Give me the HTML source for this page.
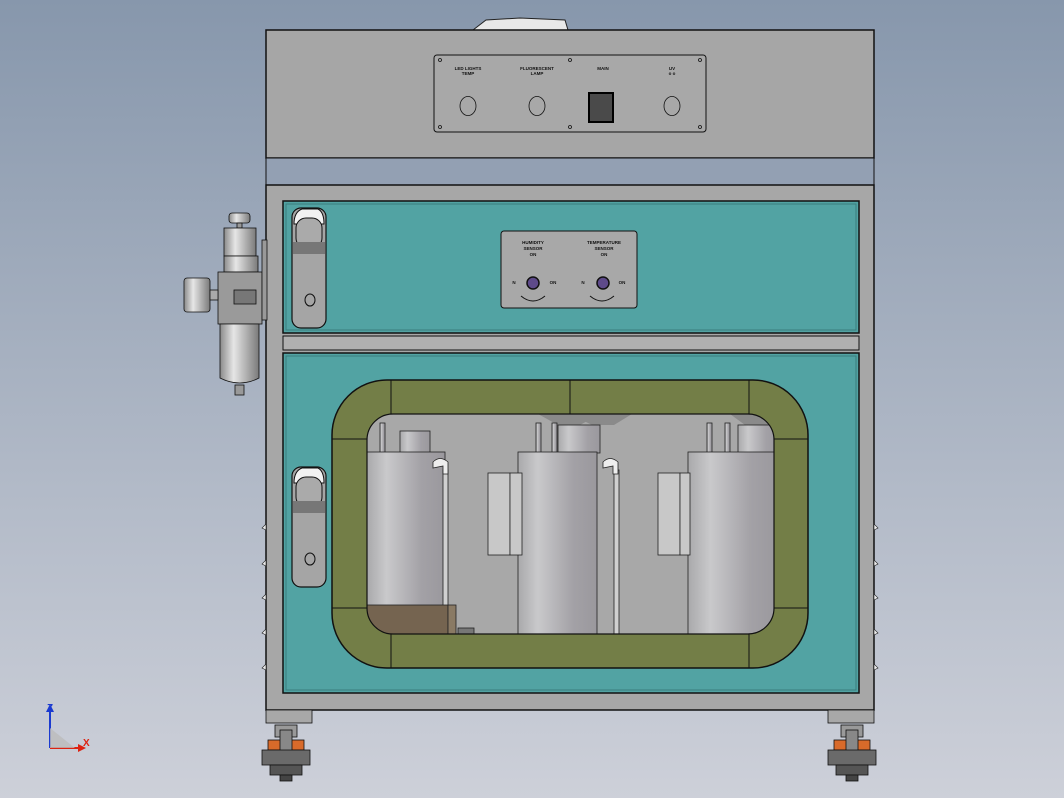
<!DOCTYPE html>
<html><head><meta charset="utf-8"><style>
html,body{margin:0;padding:0;width:1064px;height:798px;overflow:hidden}
svg{display:block}
text{font-family:"Liberation Sans",sans-serif;font-weight:bold}
</style></head><body>
<svg width="1064" height="798" viewBox="0 0 1064 798" xmlns="http://www.w3.org/2000/svg">
<defs>
<linearGradient id="bg" x1="0" y1="0" x2="0" y2="1"><stop offset="0" stop-color="#8797ac"/><stop offset="1" stop-color="#cdd0d9"/></linearGradient>
<linearGradient id="cyl" x1="0" y1="0" x2="1" y2="0"><stop offset="0" stop-color="#a9a9ab"/><stop offset="0.25" stop-color="#c9c9cb"/><stop offset="0.7" stop-color="#a3a1a6"/><stop offset="1" stop-color="#9a989d"/></linearGradient>
<linearGradient id="met" x1="0" y1="0" x2="1" y2="0"><stop offset="0" stop-color="#8a8a8a"/><stop offset="0.35" stop-color="#e6e6e6"/><stop offset="1" stop-color="#7a7a7a"/></linearGradient>
<clipPath id="win"><rect x="367" y="414" width="407" height="220" rx="26"/></clipPath>
</defs>
<rect width="1064" height="798" fill="url(#bg)"/>
<path d="M473 30 L486 20 L520 18 L565 20 L568 30 Z" fill="#e8e8e8" stroke="#222" stroke-width="1"/>
<rect x="266" y="30" width="608" height="128" fill="#a6a6a6" stroke="#111" stroke-width="1.5"/>
<rect x="434" y="55" width="272" height="77" rx="3" fill="#a8a8a8" stroke="#111"/>
<g fill="none" stroke="#111" stroke-width="0.8">
<circle cx="440" cy="60" r="1.5"/><circle cx="700" cy="60" r="1.5"/><circle cx="440" cy="127" r="1.5"/><circle cx="700" cy="127" r="1.5"/>
<circle cx="570" cy="60" r="1.5"/><circle cx="570" cy="127" r="1.5"/>
<ellipse cx="468" cy="106" rx="8" ry="9.5"/><ellipse cx="537" cy="106" rx="8" ry="9.5"/><ellipse cx="672" cy="106" rx="8" ry="9.5"/>
</g>
<rect x="589" y="93" width="24" height="29" fill="#4a4a4a" stroke="#000" stroke-width="2"/>
<g font-size="4.5" fill="#111" text-anchor="middle">
<text x="468" y="70">LED LIGHTS</text><text x="468" y="75">TEMP</text>
<text x="537" y="70">FLUORESCENT</text><text x="537" y="75">LAMP</text>
<text x="603" y="70">MAIN</text><text x="672" y="70">UV</text><text x="672" y="75">o  o</text>
</g>
<rect x="266" y="158" width="608" height="27" fill="#93a0b3" stroke="#111" stroke-width="1"/>
<rect x="266" y="185" width="608" height="525" fill="#a7a7a7" stroke="#111" stroke-width="1.5"/>
<rect x="283" y="201" width="576" height="132" fill="#52a3a3" stroke="#111" stroke-width="1.5"/>
<rect x="286" y="204" width="570" height="126" fill="none" stroke="#3a7d7d" stroke-width="1"/>
<rect x="283" y="336" width="576" height="14" fill="#b0b0b0" stroke="#111"/>
<rect x="283" y="353" width="576" height="340" fill="#52a3a3" stroke="#111" stroke-width="1.5"/>
<rect x="286" y="356" width="570" height="334" fill="none" stroke="#3a7d7d" stroke-width="1"/>
<rect x="501" y="231" width="136" height="77" rx="3" fill="#a8a8a8" stroke="#111"/>
<g font-size="4.5" fill="#111" text-anchor="middle">
<text x="533" y="244">HUMIDITY</text><text x="533" y="250">SENSOR</text><text x="533" y="256">ON</text>
<text x="604" y="244">TEMPERATURE</text><text x="604" y="250">SENSOR</text><text x="604" y="256">ON</text>
<text x="514" y="284">N</text><text x="553" y="284">ON</text><text x="583" y="284">N</text><text x="622" y="284">ON</text>
</g>
<circle cx="533" cy="283" r="6" fill="#5e4a8a" stroke="#111" stroke-width="1.5"/>
<circle cx="603" cy="283" r="6" fill="#5e4a8a" stroke="#111" stroke-width="1.5"/>
<path d="M521 296 Q533 306 545 296 M590 296 Q602 306 614 296" fill="none" stroke="#111"/>
<g id="h">
<rect x="292" y="208" width="34" height="120" rx="9" fill="#a5a5a5" stroke="#111" stroke-width="1.2"/>
<path d="M294 224 Q294 212 302 209 L318 209 Q324 212 324 224 Z" fill="#f2f2f2" stroke="#111"/>
<rect x="296" y="218" width="26" height="30" rx="10" fill="#aaa" stroke="#111"/>
<rect x="293" y="242" width="32" height="12" fill="#777"/>
<ellipse cx="310" cy="300" rx="5" ry="6" fill="none" stroke="#111"/>
</g>
<use href="#h" y="259"/>
<rect x="332" y="380" width="476" height="288" rx="55" fill="#737e47" stroke="#111" stroke-width="1.5"/>
<g stroke="#111" stroke-width="1"><line x1="391" y1="380" x2="391" y2="414"/><line x1="570" y1="380" x2="570" y2="414"/><line x1="749" y1="380" x2="749" y2="414"/><line x1="391" y1="634" x2="391" y2="668"/><line x1="749" y1="634" x2="749" y2="668"/>
<line x1="332" y1="439" x2="367" y2="439"/><line x1="332" y1="608" x2="367" y2="608"/><line x1="774" y1="439" x2="808" y2="439"/><line x1="774" y1="608" x2="808" y2="608"/></g>
<rect x="367" y="414" width="407" height="220" rx="26" fill="#a8a8a8"/>
<g clip-path="url(#win)">
<path d="M538 414 L600 414 L580 425 L558 425 Z M570 414 L632 414 L614 425 L592 425 Z M730 414 L775 414 L770 425 L745 425 Z" fill="#8a8a8a"/>
<g stroke="#222" stroke-width="0.8">
<rect x="400" y="431" width="30" height="22" fill="url(#cyl)"/>
<rect x="380" y="423" width="5" height="30" fill="url(#cyl)"/>
<rect x="367" y="452" width="78" height="182" fill="url(#cyl)"/>
<rect x="558" y="425" width="42" height="28" fill="url(#cyl)"/>
<rect x="536" y="423" width="5" height="30" fill="url(#cyl)"/><rect x="552" y="423" width="5" height="30" fill="url(#cyl)"/>
<rect x="518" y="452" width="79" height="182" fill="url(#cyl)"/>
<rect x="488" y="473" width="22" height="82" fill="#c8c8c8"/><rect x="510" y="473" width="12" height="82" fill="#c8c8c8"/>
<rect x="738" y="425" width="40" height="28" fill="url(#cyl)"/>
<rect x="707" y="423" width="5" height="30" fill="url(#cyl)"/><rect x="725" y="423" width="5" height="30" fill="url(#cyl)"/>
<rect x="688" y="452" width="90" height="182" fill="url(#cyl)" />
<rect x="658" y="473" width="22" height="82" fill="#c8c8c8"/><rect x="680" y="473" width="10" height="82" fill="#c8c8c8"/>
<rect x="443" y="470" width="5" height="164" fill="#d0d0d0"/><rect x="614" y="470" width="5" height="164" fill="#d0d0d0"/>
<path d="M433 462 Q440 455 448 462 L448 474 L443 474 L443 466 L433 468 Z" fill="#eee"/>
<path d="M603 462 Q610 455 618 462 L618 474 L613 474 L613 466 L603 468 Z" fill="#eee"/>
<rect x="367" y="605" width="81" height="30" fill="#756450"/>
<rect x="448" y="605" width="8" height="29" fill="#8a7a64"/>
<rect x="458" y="628" width="16" height="6" fill="#777"/>
</g>
</g>
<rect x="367" y="414" width="407" height="220" rx="26" fill="none" stroke="#111" stroke-width="1.2"/>
<g fill="#eee" stroke="#222" stroke-width="0.6">
<path d="M262 528 l4 -4 v6z M262 564 l4 -4 v6z M262 598 l4 -4 v6z M262 633 l4 -4 v6z M262 668 l4 -4 v6z"/>
<path d="M878 528 l-4 -4 v6z M878 564 l-4 -4 v6z M878 598 l-4 -4 v6z M878 633 l-4 -4 v6z M878 668 l-4 -4 v6z"/>
</g>
<g stroke="#111" stroke-width="0.8">
<rect x="229" y="213" width="21" height="10" rx="3" fill="url(#met)"/>
<rect x="237" y="223" width="5" height="5" fill="#999"/>
<rect x="224" y="228" width="32" height="28" fill="url(#met)"/>
<rect x="224" y="256" width="34" height="16" fill="url(#met)"/>
<rect x="218" y="272" width="44" height="52" fill="#9a9a9a"/>
<rect x="234" y="290" width="22" height="14" fill="#777"/>
<rect x="184" y="278" width="26" height="34" rx="3" fill="url(#met)"/>
<rect x="210" y="290" width="8" height="10" fill="#aaa"/>
<path d="M220 324 L259 324 L259 378 Q240 388 220 378 Z" fill="url(#met)"/>
<rect x="235" y="385" width="9" height="10" fill="#999"/>
<rect x="262" y="240" width="5" height="80" fill="#999"/>
</g>
<g stroke="#111" stroke-width="0.8">
<rect x="266" y="710" width="46" height="13" fill="#a8a8a8"/>
<rect x="828" y="710" width="46" height="13" fill="#a8a8a8"/>
<g id="c">
<rect x="275" y="725" width="22" height="12" fill="#999"/>
<rect x="268" y="740" width="36" height="10" fill="#d86a2a"/>
<rect x="280" y="730" width="12" height="25" fill="#888"/>
<rect x="262" y="750" width="48" height="15" fill="#6a6a6a"/>
<rect x="270" y="765" width="32" height="10" fill="#555"/>
<rect x="280" y="775" width="12" height="6" fill="#444"/>
</g>
<use href="#c" x="566"/>
</g>
<g stroke-width="2">
<line x1="50" y1="748" x2="50" y2="710" stroke="#1b3ad0"/>
<line x1="50" y1="748" x2="80" y2="748" stroke="#d21"/>
</g>
<path d="M50 748 L50 728 L75 748 Z" fill="#bbb" opacity="0.8"/>
<path d="M46 712 L50 704 L54 712 Z" fill="#1b3ad0"/><path d="M78 744 L86 748 L78 752 Z" fill="#d21"/>
<text x="47" y="711" font-size="10" fill="#1b3ad0" font-weight="normal">Z</text>
<text x="83" y="746" font-size="10" fill="#d21" font-weight="normal">X</text>
</svg>
</body></html>
